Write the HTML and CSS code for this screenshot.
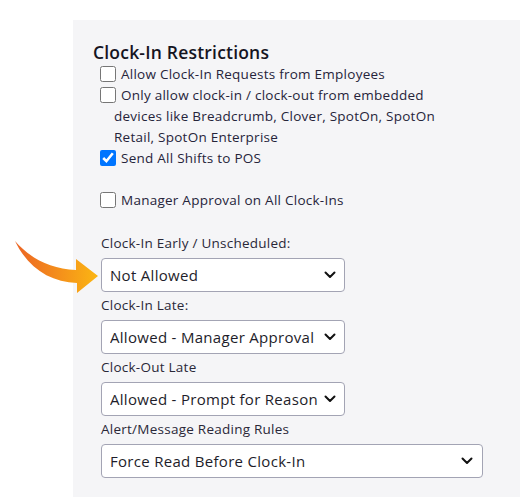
FILE: index.html
```html
<!DOCTYPE html>
<html>
<head>
<meta charset="utf-8">
<link rel="stylesheet" href="styles.css">
</head>
<body>
<div class="panel">
  <h2 class="title">Clock-In Restrictions</h2>
  <div class="checks">
    <label class="check"><input type="checkbox" class="box">Allow Clock-In Requests from Employees</label>
    <label class="check"><input type="checkbox" class="box">Only allow clock-in / clock-out from embedded devices like Breadcrumb, Clover, SpotOn, SpotOn Retail, SpotOn Enterprise</label>
    <label class="check"><input type="checkbox" class="box" checked>Send All Shifts to POS</label>
    <label class="check spaced"><input type="checkbox" class="box">Manager Approval on All Clock-Ins</label>
  </div>
  <div class="fields">
    <div class="field-label first">Clock-In Early / Unscheduled:</div>
    <div class="select"><span class="val">Not Allowed</span><svg class="chev" viewBox="0 0 12 8" width="12" height="8"><path d="M1.5 1.5 L6 6 L10.5 1.5" fill="none" stroke="#111" stroke-width="2" stroke-linecap="round" stroke-linejoin="round"/></svg></div>
    <div class="field-label">Clock-In Late:</div>
    <div class="select"><span class="val">Allowed - Manager Approval</span><svg class="chev" viewBox="0 0 12 8" width="12" height="8"><path d="M1.5 1.5 L6 6 L10.5 1.5" fill="none" stroke="#111" stroke-width="2" stroke-linecap="round" stroke-linejoin="round"/></svg></div>
    <div class="field-label">Clock-Out Late</div>
    <div class="select"><span class="val">Allowed - Prompt for Reason</span><svg class="chev" viewBox="0 0 12 8" width="12" height="8"><path d="M1.5 1.5 L6 6 L10.5 1.5" fill="none" stroke="#111" stroke-width="2" stroke-linecap="round" stroke-linejoin="round"/></svg></div>
    <div class="field-label">Alert/Message Reading Rules</div>
    <div class="select wide"><span class="val">Force Read Before Clock-In</span><svg class="chev" viewBox="0 0 12 8" width="12" height="8"><path d="M1.5 1.5 L6 6 L10.5 1.5" fill="none" stroke="#111" stroke-width="2" stroke-linecap="round" stroke-linejoin="round"/></svg></div>
  </div>
</div>
<svg class="arrow" width="110" height="60" viewBox="0 240 110 60">
  <defs>
    <linearGradient id="ag" x1="15" y1="0" x2="98" y2="0" gradientUnits="userSpaceOnUse">
      <stop offset="0" stop-color="#ec6424"/>
      <stop offset="1" stop-color="#fbb613"/>
    </linearGradient>
  </defs>
  <path d="M15 241 C30 258 50 269 76 270 L76 259 L98 276 L77 293 L77 283 C50 282 28 268 15 241 Z" fill="url(#ag)"/>
</svg>
</body>
</html>
```

FILE: styles.css
```css
html, body {
  margin: 0;
  padding: 0;
  background: #ffffff;
}
body {
  position: relative;
  width: 528px;
  height: 497px;
  overflow: hidden;
  font-family: "Open Sans", "Liberation Sans", sans-serif;
  color: #26243a;
}
.panel {
  margin: 20px 0 0 73px;
  width: 447px;
  height: 477px;
  background: #f5f5f7;
  padding: 20px 0 0 20px;
  box-sizing: border-box;
}
.title {
  margin: 0;
  font-size: 17.5px;
  font-weight: 600;
  letter-spacing: 0.2px;
  line-height: 24px;
  color: #15141f;
}
.checks {
  margin-left: 7px;
  width: 336px;
  font-size: 13.5px;
  letter-spacing: 0.25px;
}
.check {
  display: block;
  line-height: 21px;
  padding-left: 14px;
  text-indent: -14px;
}
.check.spaced {
  margin-top: 21px;
}
.box {
  width: 16px;
  height: 16px;
  margin: 0 5px 0 0;
  vertical-align: -3px;
  text-indent: 0;
}
.fields {
  margin-left: 8px;
  margin-top: 22px;
}
.field-label {
  font-size: 13.5px;
  letter-spacing: 0.25px;
  line-height: 20px;
  margin-top: 3px;
  color: #2a2838;
}
.field-label.first {
  margin-top: 0;
}
.select {
  margin-top: 5px;
  width: 244px;
  height: 34px;
  box-sizing: border-box;
  border: 1px solid #a3a4b4;
  border-radius: 4px;
  background: #ffffff;
  display: flex;
  align-items: center;
  justify-content: space-between;
  padding: 0 8px 0 8px;
  font-size: 15px;
  letter-spacing: 0.3px;
  color: #1e1d2a;
  white-space: nowrap;
}
.val {
  overflow: hidden;
}
.select.wide {
  width: 382px;
  padding-right: 9px;
}
.chev {
  flex: none;
  margin-left: 4px;
}
.arrow {
  position: absolute;
  left: 0;
  top: 240px;
}
```
